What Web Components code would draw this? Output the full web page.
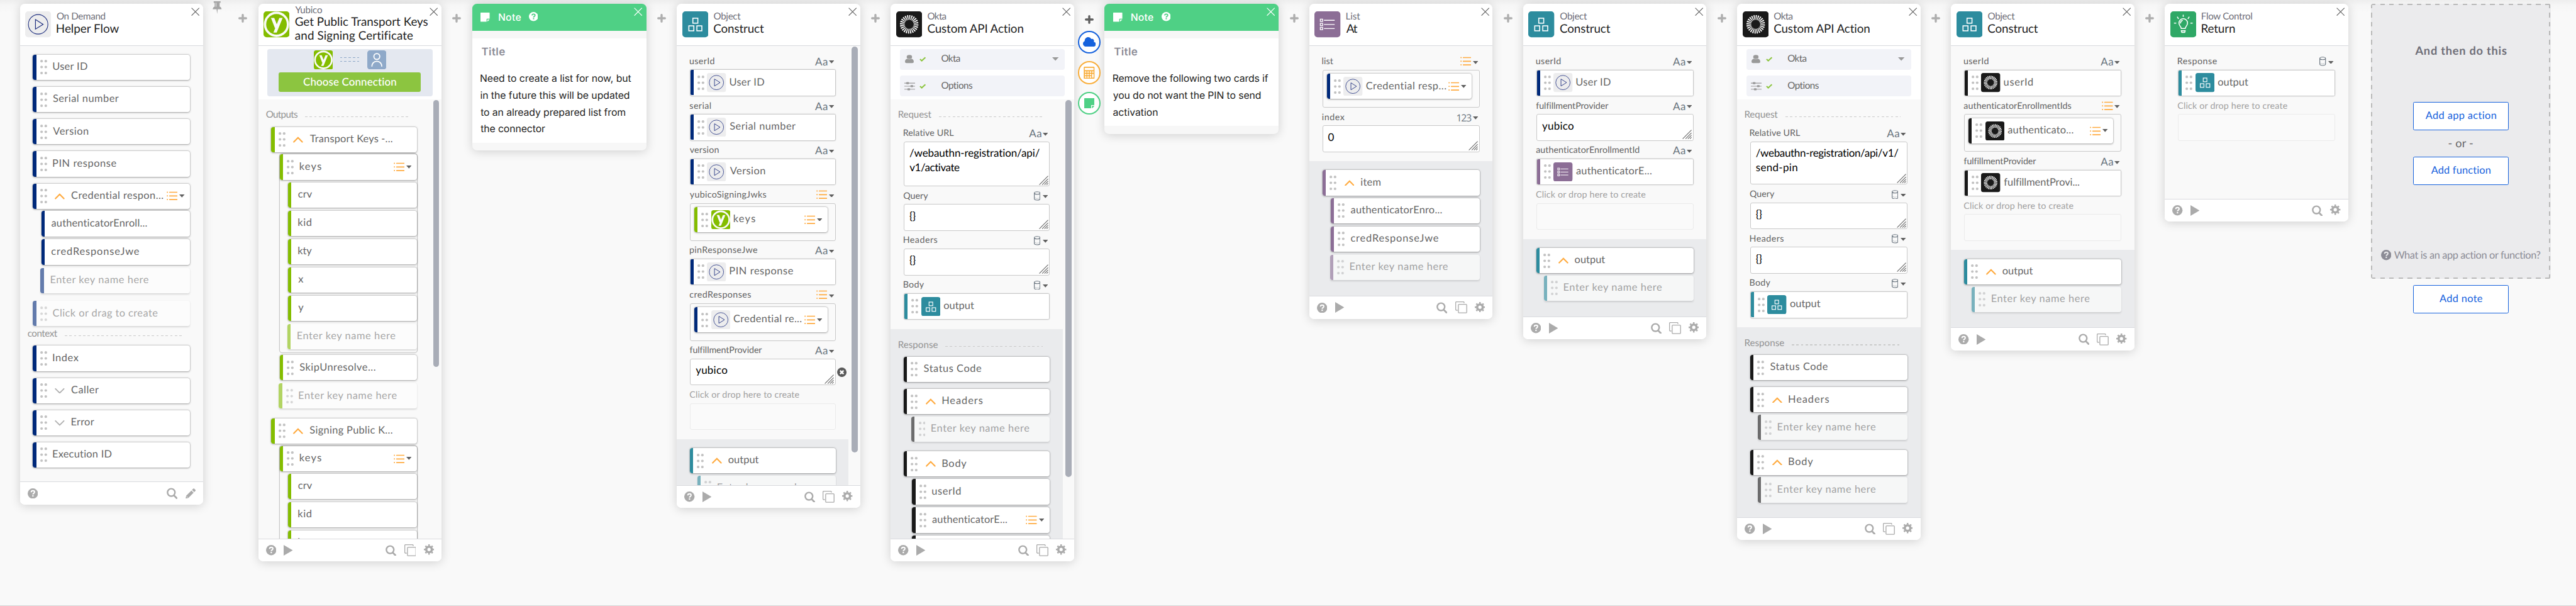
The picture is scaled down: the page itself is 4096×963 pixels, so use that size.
<!DOCTYPE html>
<html lang="en">
<head>
<meta charset="utf-8">
<title>Flow editor</title>
<style>
html,body{margin:0;padding:0;background:#f9f9f9;overflow:hidden}
body{height:963px;font-family:Lato,"Open Sans",sans-serif}
</style>
</head>
<body>
<flow-canvas>
  <flow-card icon="demand" h="1310" foot="help|search,pencil">
    <flow-text slot="cat" s="25" w="126">On Demand</flow-text>
    <flow-text slot="title" s="31" w="163">Helper Flow</flow-text>
    <flow-row c="navy" mt="23" w="90" label="User ID"></flow-row>
    <flow-row c="navy" w="172" label="Serial number"></flow-row>
    <flow-row c="navy" w="92" label="Version"></flow-row>
    <flow-row c="navy" w="165" label="PIN response"></flow-row>
    <flow-row c="navy" w="240" chev="up" list label="Credential respon..."></flow-row>
    <flow-row c="navy" w="250" mt="6" ind="22" bare label="authenticatorEnroll..."></flow-row>
    <flow-row c="navy" w="229" mt="8" ind="22" bare label="credResponseJwe"></flow-row>
    <flow-row c="navy" w="257" mt="8" ind="20" bare ghost label="Enter key name here"></flow-row>
    <flow-row c="navy" w="274" mt="20.5" ghost label="Click or drag to create"></flow-row>
    <flow-label w="77" h="51" pt="5">context</flow-label>
    <flow-row c="navy" mt="0" w="66.5" label="Index"></flow-row>
    <flow-row c="navy" w="71" chev="down" label="Caller"></flow-row>
    <flow-row c="navy" w="59" chev="down" label="Error"></flow-row>
    <flow-row c="navy" w="153" label="Execution ID"></flow-row>
  </flow-card>
  <flow-gap pin></flow-gap>

  <flow-card icon="yubico" h="1459" scroll="698" foot="help,play|search,copy,gear">
    <flow-text slot="cat" s="25" w="70">Yubico</flow-text>
    <flow-text slot="title" s="31" w="348">Get Public Transport Keys</flow-text>
    <flow-text slot="title" s="31" w="308">and Signing Certificate</flow-text>
    <flow-connect slot="top"></flow-connect>
    <flow-label w="82" h="72.5">Outputs</flow-label>
    <flow-row c="green" mt="0" w="216" chev="up" label="Transport Keys -..."></flow-row>
    <flow-nest>
      <flow-row c="green" mt="0" w="56" list label="keys"></flow-row>
      <flow-row c="green" mt="6.5" ind="22" w="36" bare label="crv"></flow-row>
      <flow-row c="green" mt="8" ind="22" w="34" bare label="kid"></flow-row>
      <flow-row c="green" mt="8" ind="22" w="35" bare label="kty"></flow-row>
      <flow-row c="green" mt="8" ind="22" w="13" bare label="x"></flow-row>
      <flow-row c="green" mt="8" ind="22" w="14.5" bare label="y"></flow-row>
      <flow-row c="green" mt="8" ind="20" w="257" bare ghost label="Enter key name here"></flow-row>
    </flow-nest>
    <flow-row c="green" mt="7.5" ind="22" w="198" label="SkipUnresolve..."></flow-row>
    <flow-row c="green" mt="8" ind="20" w="257" ghost label="Enter key name here"></flow-row>
    <flow-row c="green" mt="25.5" w="216" chev="up" label="Signing Public K..."></flow-row>
    <flow-nest>
      <flow-row c="green" mt="0" w="56" list label="keys"></flow-row>
      <flow-row c="green" mt="6.5" ind="22" w="36" bare label="crv"></flow-row>
      <flow-row c="green" mt="8" ind="22" w="34" bare label="kid"></flow-row>
      <flow-row c="green" mt="8" ind="22" w="35" bare label="kty"></flow-row>
    </flow-nest>
  </flow-card>
  <flow-gap></flow-gap>

  <flow-note h="383">
    <flow-text s="26" lh="44.3" w="394">Need to create a list for now, but</flow-text>
    <flow-text s="26" lh="44.3" w="389">in the future this will be updated</flow-text>
    <flow-text s="26" lh="44.3" w="378.6">to an already prepared list from</flow-text>
    <flow-text s="26" lh="44.3" w="168.6">the connector</flow-text>
  </flow-note>
  <flow-gap></flow-gap>

  <flow-card icon="object" h="1319" scroll="1062" foot="help,play|search,copy,gear">
    <flow-text slot="cat" s="25" w="70">Object</flow-text>
    <flow-text slot="title" s="31" w="131">Construct</flow-text>
    <flow-field mt="15.2" label="userId" w="64" type="Aa"><flow-row plain c="navy" icon="demand" w="90" label="User ID"></flow-row></flow-field>
    <flow-field label="serial" w="55" type="Aa"><flow-row plain c="navy" icon="demand" w="172" label="Serial number"></flow-row></flow-field>
    <flow-field label="version" w="75.5" type="Aa"><flow-row plain c="navy" icon="demand" w="92" label="Version"></flow-row></flow-field>
    <flow-field label="yubicoSigningJwks" w="200" type="list"><flow-row mt="0" c="green" icon="yubico" list w="56" label="keys"></flow-row></flow-field>
    <flow-field label="pinResponseJwe" w="177" type="Aa"><flow-row plain c="navy" icon="demand" w="165" label="PIN response"></flow-row></flow-field>
    <flow-field label="credResponses" w="160" type="list"><flow-row mt="0" c="navy" icon="demand" list w="177.5" label="Credential re..."></flow-row></flow-field>
    <flow-field label="fulfillmentProvider" w="189" type="Aa" input removable><flow-text s="28" lh="38" w="82">yubico</flow-text></flow-field>
    <flow-field label="Click or drop here to create" w="287" ghost></flow-field>
    <flow-output>
      <flow-row c="teal" mt="23.5" w="79" chev="up" label="output"></flow-row>
      <flow-row c="teal" mt="6" ind="20" w="257" ghost label="Enter key name here"></flow-row>
    </flow-output>
  </flow-card>
  <flow-gap></flow-gap>

  <flow-card icon="okta" h="1459" scroll="986" foot="help,play|search,copy,gear">
    <flow-text slot="cat" s="25" w="48">Okta</flow-text>
    <flow-text slot="title" s="31" w="252">Custom API Action</flow-text>
    <flow-pills slot="top"></flow-pills>
    <flow-label w="85.5" h="64">Request</flow-label>
    <flow-field label="Relative URL" w="131" type="Aa" input h="117.5"><flow-text s="28" lh="38" w="340">/webauthn-registration/api/</flow-text><flow-text s="28" lh="38" w="130">v1/activate</flow-text></flow-field>
    <flow-field label="Query" w="63.5" type="db" input><flow-text s="28" lh="38" w="15">{}</flow-text></flow-field>
    <flow-field label="Headers" w="88" type="db" input><flow-text s="28" lh="38" w="15">{}</flow-text></flow-field>
    <flow-field label="Body" w="53" type="db"><flow-row plain c="teal" icon="object" w="79" label="output"></flow-row></flow-field>
    <flow-output>
      <flow-label w="102" h="72.5">Response</flow-label>
      <flow-row c="black" mt="0" w="150" label="Status Code"></flow-row>
      <flow-row c="black" w="105" chev="up" label="Headers"></flow-row>
      <flow-row c="black" mt="6" ind="20" w="257" ghost label="Enter key name here"></flow-row>
      <flow-row c="black" mt="25" w="63" chev="up" label="Body"></flow-row>
      <flow-row c="black" mt="6.5" ind="22" w="74" label="userId"></flow-row>
      <flow-row c="black" mt="8" ind="22" w="195.5" list label="authenticatorE..."></flow-row>
      <flow-row c="black" mt="8" ind="22" w="229" label="credResponseJwe"></flow-row>
    </flow-output>
  </flow-card>
  <flow-gap open></flow-gap>

  <flow-note h="340">
    <flow-text s="26" lh="44.3" w="406">Remove the following two cards if</flow-text>
    <flow-text s="26" lh="44.3" w="386">you do not want the PIN to send</flow-text>
    <flow-text s="26" lh="44.3" w="116">activation</flow-text>
  </flow-note>
  <flow-gap></flow-gap>

  <flow-card icon="list" h="824" foot="help,play|search,copy,gear">
    <flow-text slot="cat" s="25" w="36">List</flow-text>
    <flow-text slot="title" s="31" w="29">At</flow-text>
    <flow-field mt="15.8" label="list" w="28.5" type="list"><flow-row mt="0" c="navy" icon="demand" list w="209" label="Credential resp..."></flow-row></flow-field>
    <flow-field label="index" w="58" type="123" input><flow-text s="28" lh="38" w="15">0</flow-text></flow-field>
    <flow-output>
      <flow-row c="purple" mt="23.5" w="51" chev="up" label="item"></flow-row>
      <flow-row c="purple" mt="6.5" ind="22" w="238.5" label="authenticatorEnro..."></flow-row>
      <flow-row c="purple" mt="8" ind="22" w="229" label="credResponseJwe"></flow-row>
      <flow-row c="purple" mt="8" ind="20" w="257" ghost label="Enter key name here"></flow-row>
    </flow-output>
  </flow-card>
  <flow-gap></flow-gap>

  <flow-card icon="object" h="878" foot="help,play|search,copy,gear">
    <flow-text slot="cat" s="25" w="70">Object</flow-text>
    <flow-text slot="title" s="31" w="131">Construct</flow-text>
    <flow-field mt="15.5" label="userId" w="64" type="Aa"><flow-row plain c="navy" icon="demand" w="90" label="User ID"></flow-row></flow-field>
    <flow-field label="fulfillmentProvider" w="189" type="Aa" input><flow-text s="28" lh="38" w="82">yubico</flow-text></flow-field>
    <flow-field label="authenticatorEnrollmentId" w="270" type="Aa"><flow-row plain c="purple" icon="list" w="197" label="authenticatorE..."></flow-row></flow-field>
    <flow-field label="Click or drop here to create" w="287" ghost></flow-field>
    <flow-output>
      <flow-row c="teal" mt="23.5" w="79" chev="up" label="output"></flow-row>
      <flow-row c="teal" mt="6" ind="20" w="257" ghost label="Enter key name here"></flow-row>
    </flow-output>
  </flow-card>
  <flow-gap></flow-gap>

  <flow-card icon="okta" h="1403" foot="help,play|search,copy,gear">
    <flow-text slot="cat" s="25" w="48">Okta</flow-text>
    <flow-text slot="title" s="31" w="252">Custom API Action</flow-text>
    <flow-pills slot="top"></flow-pills>
    <flow-label w="85.5" h="64">Request</flow-label>
    <flow-field label="Relative URL" w="131" type="Aa" input h="113"><flow-text s="28" lh="38" w="372.5">/webauthn-registration/api/v1/</flow-text><flow-text s="28" lh="38" w="108">send-pin</flow-text></flow-field>
    <flow-field label="Query" w="63.5" type="db" input><flow-text s="28" lh="38" w="15">{}</flow-text></flow-field>
    <flow-field label="Headers" w="88" type="db" input><flow-text s="28" lh="38" w="15">{}</flow-text></flow-field>
    <flow-field label="Body" w="53" type="db"><flow-row plain c="teal" icon="object" w="79" label="output"></flow-row></flow-field>
    <flow-output>
      <flow-label w="102" h="72.5">Response</flow-label>
      <flow-row c="black" mt="0" w="150" label="Status Code"></flow-row>
      <flow-row c="black" w="105" chev="up" label="Headers"></flow-row>
      <flow-row c="black" mt="6" ind="20" w="257" ghost label="Enter key name here"></flow-row>
      <flow-row c="black" mt="25" w="63" chev="up" label="Body"></flow-row>
      <flow-row c="black" mt="6" ind="20" w="257" ghost label="Enter key name here"></flow-row>
    </flow-output>
  </flow-card>
  <flow-gap></flow-gap>

  <flow-card icon="object" h="907" foot="help,play|search,copy,gear">
    <flow-text slot="cat" s="25" w="70">Object</flow-text>
    <flow-text slot="title" s="31" w="131">Construct</flow-text>
    <flow-field mt="15.5" label="userId" w="64" type="Aa"><flow-row plain c="black" icon="okta" w="75" label="userId"></flow-row></flow-field>
    <flow-field label="authenticatorEnrollmentIds" w="281" type="list"><flow-row mt="0" c="black" icon="okta" list w="171" label="authenticato..."></flow-row></flow-field>
    <flow-field label="fulfillmentProvider" w="189" type="Aa"><flow-row plain c="black" icon="okta" w="197" label="fulfillmentProvi..."></flow-row></flow-field>
    <flow-field label="Click or drop here to create" w="287" ghost></flow-field>
    <flow-output>
      <flow-row c="teal" mt="23.5" w="79" chev="up" label="output"></flow-row>
      <flow-row c="teal" mt="6" ind="20" w="257" ghost label="Enter key name here"></flow-row>
    </flow-output>
  </flow-card>
  <flow-gap></flow-gap>

  <flow-card icon="bulb" h="570" foot="help,play|search,gear">
    <flow-text slot="cat" s="25" w="132">Flow Control</flow-text>
    <flow-text slot="title" s="31" w="86">Return</flow-text>
    <flow-field mt="15.5" label="Response" w="102" type="db"><flow-row plain c="teal" icon="object" w="79" label="output"></flow-row></flow-field>
    <flow-field label="Click or drop here to create" w="287" ghost></flow-field>
  </flow-card>
  <flow-next></flow-next>
</flow-canvas>

<script>
const COLORS = {navy:'#00297a', green:'#84bd00', teal:'#2d8c9e', black:'#191919', purple:'#8c6e96'};
const SQUARE = '<rect width="68" height="68" rx="8" fill=';
const ICONS = {
  demand: ['0 0 68 68', SQUARE+'"#ededee"/><circle cx="34" cy="34" r="25.5" fill="none" stroke="#1f2f7f" stroke-width="1.8"/><path d="M27 21.5 47 34 27 46.5z" fill="none" stroke="#1f2f7f" stroke-width="2"/>'],
  yubico: ['0 0 68 68', SQUARE+'"#84bd00"/><circle cx="34" cy="34" r="30" fill="none" stroke="#fafafa" stroke-width="6"/><svg x="15" y="17.3" width="40" height="38.4" viewBox="15 17.3 40 38.4"><path d="M21 10 33.5 42M48.7 10 28 61" stroke="#fafafa" stroke-width="8" fill="none"/></svg>'],
  object: ['0 0 68 68', SQUARE+'"#2d8c9e"/><g fill="none" stroke="#fff" stroke-width="2.6"><rect x="27.5" y="18" width="13" height="13"/><rect x="17" y="38" width="13" height="13"/><rect x="38" y="38" width="13" height="13"/></g>'],
  okta: ['0 0 68 68', SQUARE+'"#191919"/><circle cx="34" cy="34" r="18" fill="none" stroke="#fff" stroke-width="12.5" pathLength="96" stroke-dasharray="2.2 1.8"/>'],
  list: ['0 0 68 68', SQUARE+'"#8c6e96"/><g fill="none" stroke="#fff" stroke-width="2.2"><rect x="15.5" y="20.5" width="6" height="6"/><rect x="15.5" y="31.5" width="6" height="6"/><rect x="15.5" y="42" width="6" height="6"/><path d="M25 23.5H53M25 34.500H53M25 45H53"/></g>'],
  bulb: ['0 0 68 68', SQUARE+'"#2fa866"/><g fill="none" stroke="#fff" stroke-width="2.6" stroke-linecap="round"><path d="M28.500 45C28.500 40 22.500 38 22.500 30.500a11 11 0 0 1 22.500 0C45 38 39 40 39 45z"/><path d="M26.500 31a7.500 7.500 0 0 1 5-7"/><path d="M28.500 50.500H39M30.500 55H37M28.500 50.500L30 55H37.500L39 50.500M33.700 10v3.500M18.500 15l2.500 4M49 15l-2.500 4M10.500 31h4M53.500 31h4"/></g>'],
  person: ['0 0 50 50', '<rect width="50" height="50" rx="7" fill="#8fa9c9"/><circle cx="25" cy="16" r="7.700" fill="none" stroke="#fff" stroke-width="3"/><path d="M12 42.500C12 34 17.500 28.500 25 28.500S38 34 38 42.500" fill="none" stroke="#fff" stroke-width="3"/>'],
  grip: ['0 0 18 38', '<g fill="#c2c2c2"><circle cx="3.500" cy="3.500" r="3.400"/><circle cx="14.500" cy="3.500" r="3.400"/><circle cx="3.500" cy="19" r="3.400"/><circle cx="14.500" cy="19" r="3.400"/><circle cx="3.500" cy="34.500" r="3.400"/><circle cx="14.500" cy="34.500" r="3.400"/></g>'],
  up: ['0 0 26 16', '<path d="M2 14 13 3 24 14" fill="none" stroke="#ffab40" stroke-width="3.600" stroke-linecap="round"/>'],
  down: ['0 0 26 16', '<path d="M2 3 13 14 24 3" fill="none" stroke="#b0b0b0" stroke-width="3" stroke-linecap="round"/>'],
  bars: ['0 0 29 24', '<g fill="#ffab40"><circle cx="1.900" cy="2.500" r="1.700"/><circle cx="1.900" cy="12" r="1.700"/><circle cx="1.900" cy="21.500" r="1.700"/><rect x="6.500" y="1.100" width="22.500" height="2.800" rx="1"/><rect x="6.500" y="10.600" width="22.500" height="2.800" rx="1"/><rect x="6.500" y="20.100" width="22.500" height="2.800" rx="1"/></g>'],
  caret: ['0 0 14 8', '<path d="M0 0H14L7 8z" fill="currentColor"/>'],
  db: ['0 0 17 24', '<g fill="none" stroke="#6b7680" stroke-width="1.900"><path d="M1 4.500V19.500C1 21.500 4 23 8.500 23S16 21.500 16 19.500V4.500"/><ellipse cx="8.500" cy="4.500" rx="7.500" ry="3.300"/></g><path d="M3 17.500q5.500 2.500 11 0" stroke="#6b7680" stroke-width="1.200" stroke-dasharray="2 1.500" fill="none"/>'],
  close: ['0 0 22 22', '<path d="M1 1 21 21M21 1 1 21" stroke="currentColor" stroke-width="1.800" fill="none"/>'],
  plus: ['0 0 23 23', '<path d="M11.500 2.800V20.200M2.800 11.500H20.200" stroke="currentColor" stroke-width="5.600" stroke-linecap="round"/>'],
  pin: ['0 0 24 34', '<path d="M3 0H21V4H18.500V14C21.500 15 23.500 17.500 23.500 21H13.500L12 33.500 10.500 21H.5C.5 17.500 2.500 15 5.500 14V4H3z" fill="#a6a6a6"/><path d="M9 4V14.500" stroke="#f4f4f4" stroke-width="1.500"/>'],
  help: ['0 0 27 27', '<circle cx="13.500" cy="13.500" r="13.500" fill="currentColor"/><path d="M9.200 10.300C9.400 7.500 11.300 6.300 13.600 6.300c2.500 0 4.400 1.500 4.400 3.700 0 3-4.200 3-4.200 6" fill="none" stroke="var(--mark,#fff)" stroke-width="3.300"/><rect x="12" y="18" width="3.500" height="3.600" fill="var(--mark,#fff)"/>'],
  play: ['0 0 24 28', '<path d="M0 0 24 14 0 28z" fill="currentColor"/>'],
  search: ['0 0 28 29', '<circle cx="12" cy="12.500" r="9.800" fill="none" stroke="currentColor" stroke-width="4"/><path d="M19 20 26 27.300" stroke="currentColor" stroke-width="4.600" stroke-linecap="round"/>'],
  copy: ['0 0 31 31', '<g fill="none" stroke="currentColor" stroke-width="2.200"><path d="M6 23H3Q1 23 1 21V3Q1 1 3 1H21Q23 1 23 3V4.500"/><rect x="8" y="7.500" width="22" height="22.500" rx="2"/></g>'],
  gear: ['0 0 27 27', '<g fill="none" stroke="currentColor"><circle cx="13.500" cy="13.500" r="7.300" stroke-width="6"/><circle cx="13.500" cy="13.500" r="11.500" stroke-width="4" pathLength="16" stroke-dasharray=".9 1.100" stroke-dashoffset=".45"/></g>'],
  pencil: ['0 0 27 27', '<path d="M0 27 1.800 19.500 15.500 5.800 21.200 11.500 7.500 25.200zM17 4.300 20.300 1Q21.500 0 22.800 1L26 4.200Q27 5.500 26 6.700L22.700 10z" fill="currentColor"/><path d="M3 21.500 5.500 24" stroke="#fff" stroke-width="1.500"/>'],
  user: ['0 0 23 29', '<circle cx="11.500" cy="7.500" r="7" fill="#999"/><path d="M0 24.500C0 17 4 14.500 6.500 14.300Q11.500 17.500 16.500 14.300C19 14.500 23 17 23 24.500Q23 28.500 19 28.500H4Q0 28.500 0 24.500z" fill="#999"/>'],
  check: ['0 0 17 13', '<path d="M1.500 6.500 6 10.800 15.500 2" fill="none" stroke="#8dc540" stroke-width="3.200"/>'],
  sliders: ['0 0 28 26', '<path d="M0 4H28M0 13H28M0 22H28" stroke="#999" stroke-width="2"/><g fill="#999"><rect x="5" y="1" width="7" height="6" rx="1.500"/><rect x="16" y="10" width="7" height="6" rx="1.500"/><rect x="8" y="19" width="7" height="6" rx="1.500"/></g>'],
  sticky: ['0 0 24 24', '<path d="M1 0H23Q24 0 24 1V16H17Q16 16 16 17V24H1Q0 24 0 23V1Q0 0 1 0zM18 18H24L18 24z" fill="currentColor"/>'],
  cloud: ['0 0 34 25', '<path d="M8 25C3.500 25 0 21.500 0 17.300 0 13.800 2 11.300 4.500 10.200 4.300 4.300 8.500 0 13.500 0c3.800 0 6.500 2 8 5 4-1.800 8 .8 7.500 5.600-.1.700-.3 1.200-.5 1.600C32 13 34 15.500 34 18.500 34 22 31 25 27.500 25z" fill="#1662dd"/>'],
  calc: ['0 0 29 32', '<rect x=".5" width="28" height="32" rx="2" fill="#f9ae3b"/><g fill="#fff"><rect x="3" y="3" width="23" height="6"/><circle cx="5.500" cy="14" r="2.100"/><circle cx="11.700" cy="14" r="2.100"/><circle cx="18" cy="14" r="2.100"/><circle cx="24.200" cy="14" r="2.100"/><circle cx="5.500" cy="20.500" r="2.100"/><circle cx="11.700" cy="20.500" r="2.100"/><circle cx="18" cy="20.500" r="2.100"/><circle cx="5.500" cy="27" r="2.100"/><circle cx="11.700" cy="27" r="2.100"/><circle cx="18" cy="27" r="2.100"/><rect x="22.200" y="18.500" width="4" height="10.500" rx="2"/></g>'],
  remove: ['0 0 25 25', '<circle cx="12.500" cy="12.500" r="12.300" fill="#5a5a5a"/><path d="M8 8 17 17M17 8 8 17" stroke="#fff" stroke-width="4"/>'],
  grab: ['0 0 25 25', '<path d="M1 24 24 1M8.500 24 24 8.500M14.500 24 24 14.500M20 24 24 20" stroke="#666" stroke-width="1.800"/>']
};
const SIZE = {grip:[18,38],up:[26,16],down:[26,16],bars:[29,24],caret:[14,8],db:[17,24],close:[22,22],plus:[23,23],pin:[24,34],help:[27,27],play:[24,28],search:[28,29],copy:[31,31],gear:[27,27],pencil:[27,27],user:[23,22],check:[17,13],sliders:[28,23],sticky:[24,24],cloud:[34,25],calc:[29,32],remove:[25,25],grab:[25,25],person:[50,50]};

class Base extends HTMLElement {
  connectedCallback() {
    if (!this.shadowRoot) this.attachShadow({mode:'open'}).innerHTML = this.view();
    if (this.ready) this.ready();
  }
  a(n, d) { return this.hasAttribute(n) ? this.getAttribute(n) : d; }
  has(n) { return this.hasAttribute(n); }
}
const icon = (n, cls = '', s = '') => `<flow-icon name="${n}" ${s ? `size="${s}"` : ''} class="${cls}"></flow-icon>`;
const text = (t, s, w, extra = '') => `<flow-text s="${s}" w="${w}" ${extra}>${t}</flow-text>`;

customElements.define('flow-icon', class extends Base {
  view() {
    const n = this.a('name'), [vb, body] = ICONS[n], s = this.a('size');
    const [w, h] = s ? [s, s] : SIZE[n];
    return `<style>:host{display:block;flex:none;width:${w}px;height:${h}px}svg.i{display:block;width:100%;height:100%}</style><svg class="i" viewBox="${vb}" preserveAspectRatio="none">${body}</svg>`;
  }
});

// A line of text whose tracking is set so that its inked width is exactly `w`.
const ruler = document.createElement('canvas').getContext('2d');
customElements.define('flow-text', class extends Base {
  view() {
    const t = this.textContent, s = +this.a('s'), w = +this.a('w'), wt = this.a('wt', '400'), fam = this.a('font') || (this.closest('flow-note') ? 'Inter' : 'Lato');
    ruler.font = `${wt} ${s * 4}px ${fam}`;
    ruler.letterSpacing = '0.01px';
    const m = ruler.measureText(t);
    const ink = (m.actualBoundingBoxLeft + m.actualBoundingBoxRight) / 4;
    const ls = t.length > 1 ? (w - ink) / (t.length - 1) : 0;
    return `<style>:host{display:block;flex:none;width:${w}px;white-space:nowrap;text-align:left;font:${wt} ${s}px/${this.a('lh', '30')}px ${fam},sans-serif;letter-spacing:${ls.toFixed(3)}px;font-variant-ligatures:none;text-rendering:geometricPrecision}span{display:block;margin-left:${(m.actualBoundingBoxLeft / 4).toFixed(2)}px}</style><span><slot></slot></span>`;
  }
});

customElements.define('flow-canvas', class extends Base {
  view() {
    return `<style>:host{display:block;box-sizing:border-box;zoom:.60735;width:6744px;height:1585.600px;border-bottom:2px solid #d6d6d6;background:linear-gradient(#eeeeee,#f6f6f6 14px,#f9f9f9 34px)}
    .rail{display:flex;align-items:flex-start;padding-left:52px}</style><div class="rail"><slot></slot></div>`;
  }
});

customElements.define('flow-gap', class extends Base {
  view() {
    const pin = this.has('pin'), open = this.has('open');
    return `<style>:host{display:flex;flex:none;width:${pin ? 144 : 80}px;color:#aeaeae}
    .pin{margin:4px 0 0 25px}.col{display:flex;flex-direction:column;align-items:center;width:80px;margin-left:auto;padding-top:37px}
    .open{padding-top:39px;color:#5f5f5f}.pin+.col{width:80px;margin-left:15px}
    .ring{box-sizing:border-box;width:60px;height:60px;border:4px solid;border-radius:50%;background:#fff;display:flex;align-items:center;justify-content:center;margin-top:20px}
    .plus+.ring{margin-top:18px}.b{color:#1662dd}.o{color:#f9ae3b}.g{color:#4fd085}</style>
    ${pin ? icon('pin', 'pin') : ''}<div class="col ${open ? 'open' : ''}">${icon('plus', 'plus')}${open ? `<div class="ring b">${icon('cloud')}</div><div class="ring o">${icon('calc')}</div><div class="ring g">${icon('sticky', '', 27)}</div>` : ''}</div>`;
  }
});

customElements.define('flow-card', class extends Base {
  view() {
    const [l, r] = this.a('foot').split('|').map(p => p.split(',').map(n => icon(n, n)).join(''));
    const sc = this.a('scroll');
    return `<style>:host{display:flex;flex-direction:column;flex:none;box-sizing:border-box;width:480px;height:${this.a('h')}px;margin-top:10px;border-radius:12px;overflow:hidden;background:#fff;box-shadow:0 2px 26px rgba(0,0,0,.17)}
    header{display:flex;flex:none;box-sizing:border-box;height:110px;border-bottom:2px solid #d9dade;padding:0 9px 0 14px}
    .logo{margin-top:20px}
    .t{display:flex;flex-direction:column;justify-content:center;margin-left:15px;padding-bottom:4px;flex:1;color:#1d1d21}
    .cat{line-height:28px;color:#6e6e78;height:28px;margin-top:-1px}
    .cat ::slotted(*),::slotted([slot=cat]){margin-top:-1px}
    .title{display:flex;flex-direction:column;gap:6px;padding:3px 0}
    .x{color:#666;margin-top:10px;margin-left:-22px}
    .body{display:flex;flex:1;min-height:0;background:#f9f9f9;overflow:hidden}
    .content{display:flex;flex-direction:column;flex:1;min-width:0;box-sizing:border-box;padding:0 34px}
    .track{width:30px;flex:none}.thumb{width:16px;height:${sc || 0}px;border-radius:8px;background:#a9adb7;margin:2px 0 0 8px}
    footer{display:flex;align-items:center;flex:none;box-sizing:border-box;height:60px;border-top:2px solid #d9dade;padding:0 20px;color:#ababab;background:#fff}
    .play{margin-left:20px}.sp{flex:1}.search{margin-right:20.5px}.copy{margin-right:20px}.gear{margin-top:-3px}</style>
    <header>${icon(this.a('icon'), 'logo', 68)}<div class="t"><div class="cat"><slot name="cat"></slot></div><div class="title"><slot name="title"></slot></div></div>${icon('close', 'x')}</header>
    <slot name="top"></slot>
    <div class="body"><div class="content"><slot></slot></div>${sc ? '<div class="track"><div class="thumb"></div></div>' : ''}</div>
    <footer>${l}<div class="sp"></div>${r}</footer>`;
  }
});

customElements.define('flow-row', class extends Base {
  view() {
    const ghost = this.has('ghost'), plain = this.has('plain'), bare = this.has('bare'), ic = this.a('icon'), chev = this.a('chev');
    return `<style>:host{display:flex;flex:none;align-items:center;box-sizing:border-box;height:${plain ? 66 : 66.2}px;margin-top:${plain ? 0 : this.a('mt', '18.1')}px;margin-left:${this.a('ind', 0)}px;background:#fff;border-radius:${plain ? 3 : 6}px;color:#666;overflow:hidden;
      ${plain ? '' : ghost ? 'opacity:.6;box-shadow:0 2px 4px rgba(0,0,0,.2);' : 'box-shadow:0 0 0 1px rgba(0,0,0,.13),0 1px 5px rgba(0,0,0,.32);'}padding-right:14.600px}
    .bar{width:9px;align-self:stretch;background:${COLORS[this.a('c')]}}
    .grip{margin-left:10px}.chev{margin-left:21px}.ic{margin-left:7px}
    .tx{margin-left:${bare ? 18 : chev ? 17.5 : ic ? 9.6 : 16}px;margin-top:-2px;${ghost ? 'color:#707070' : ''}}
    .sp{flex:1}.caret{margin-left:4.500px;color:#606060}</style>
    <div class="bar"></div>${bare ? '' : icon('grip', 'grip')}${chev ? icon(chev, 'chev') : ''}${ic ? icon(ic, 'ic', 50) : ''}
    ${text(this.a('label'), 27, this.a('w'), 'class="tx"')}<div class="sp"></div>${this.has('list') ? icon('bars') + icon('caret', 'caret') : ''}`;
  }
});

customElements.define('flow-nest', class extends Base {
  view() {
    return `<style>:host{display:flex;flex-direction:column;flex:none;margin:6px 0 0 22px;padding-bottom:7.500px;border-radius:6px;box-shadow:0 0 0 2px #c9c9c9}</style><slot></slot>`;
  }
});

customElements.define('flow-output', class extends Base {
  view() {
    return `<style>:host{display:flex;flex-direction:column;flex:1;margin:24px -34px 0;padding:0 34px;background:#eaebed}</style><slot></slot>`;
  }
});

customElements.define('flow-label', class extends Base {
  view() {
    return `<style>:host{display:flex;flex:none;box-sizing:border-box;height:${this.a('h')}px;padding-top:${this.a('pt', '26')}px;margin-left:-13px;color:#939393}
    .d{flex:1;height:2px;margin:19px 18px 0 20px;background:repeating-linear-gradient(90deg,#cbcbcb 0 6px,transparent 6px 12px)}</style>
    ${text(this.textContent, 25, this.a('w'))}<div class="d"></div>`;
  }
});

customElements.define('flow-field', class extends Base {
  view() {
    const ty = this.a('type'), ghost = this.has('ghost'), input = this.has('input'), list = ty === 'list';
    const mark = !ty ? '' : ty === 'list' ? icon('bars', 'm') : ty === 'db' ? icon('db', 'dbm') : ty === 'Aa' ? text('Aa', 28, 32, 'class="aa"') : text('123', 26, 37, 'class="aa"  font="Open Sans"');
    return `<style>:host{display:flex;flex-direction:column;flex:none;margin-top:${this.a('mt', 0)}px}
    .h{display:flex;align-items:flex-end;box-sizing:border-box;height:46.500px;padding-bottom:5.500px;color:${ghost ? '#a0a0a0' : '#636363'}}
    .sp{flex:1}.aa{color:#6b7680}.m{margin-bottom:4px}.dbm{margin:0 2px 3.500px 0}
    .caret{margin:0 4px 9.500px 4px;color:#606060}
    .line{display:flex;align-items:center}
    .b{position:relative;box-sizing:border-box;width:100%;flex:none;height:${this.a('h', list ? 99 : 70)}px;border:2px solid ${ghost ? '#ebebeb' : '#c9c9c9'};border-radius:5px;background:${list || ghost ? '#fafafa' : '#fff'};
      ${list ? 'padding:9px 19px 0 10px;' : input ? 'padding:9px 0 0 14px;color:#000;' : ''}${!list && !input && !ghost ? 'box-shadow:0 0 3px rgba(0,0,0,.2);' : ''}}
    .g{position:absolute;right:2px;bottom:2px}.rm{margin-left:3px;margin-right:-28px}</style>
    <div class="h">${text(this.a('label'), 23.5, this.a('w'))}<div class="sp"></div>${mark}${ty ? icon('caret', 'caret') : ''}</div>
    <div class="line"><div class="b"><slot></slot>${input ? icon('grab', 'g') : ''}</div>${this.has('removable') ? icon('remove', 'rm') : ''}</div>`;
  }
});

customElements.define('flow-connect', class extends Base {
  view() {
    return `<style>:host{display:block;flex:none;box-sizing:border-box;height:139.500px;padding:8px 24px 0;background:#fff}
    .box{display:flex;flex-direction:column;align-items:center;box-sizing:border-box;height:123.800px;padding-top:3px;border-radius:6px;background:#e4e8f0}
    .top{display:flex;align-items:center}.l{width:50px;height:8px;margin:0 20px;border-top:2px dashed #8fa9c9;border-bottom:2px dashed #8fa9c9;border-image:repeating-linear-gradient(90deg,#8fa9c9 0 6px,transparent 6px 11px) 2}
    .btn{display:flex;align-items:center;justify-content:center;width:372px;height:52px;margin-top:8px;border-radius:5px;background:#8cc540;color:#fff}
    .btn flow-text{margin-top:-2px}</style>
    <div class="box"><div class="top">${icon('yubico', '', 50)}<div class="l"></div>${icon('person')}</div><div class="btn">${text('Choose Connection', 28, 242, 'wt="500"')}</div></div>`;
  }
});

customElements.define('flow-pills', class extends Base {
  view() {
    return `<style>:host{display:flex;flex-direction:column;gap:16px;flex:none;box-sizing:border-box;height:139.500px;padding:8px 24px 0;background:#fff}
    .p{display:flex;align-items:center;height:54px;border-radius:6px;background:#f2f3f8;color:#666}
    .i{width:27px;display:flex;justify-content:center;margin:0 13px 0 12px}.t{margin:-3px 0 0 40px}
    .c{margin-left:auto;margin-right:17px;color:#999;width:17px;height:9px}</style>
    <div class="p"><div class="i">${icon('user')}</div>${icon('check')}${text('Okta', 25, 48.5, 'class="t"')}${icon('caret', 'c')}</div>
    <div class="p"><div class="i">${icon('sliders')}</div>${icon('check')}${text('Options', 25, 81, 'class="t"')}</div>`;
  }
});

customElements.define('flow-note', class extends Base {
  view() {
    return `<style>:host{display:flex;flex-direction:column;flex:none;box-sizing:border-box;width:456px;height:${this.a('h')}px;margin-top:10px;padding-bottom:20px;border-radius:12px;overflow:hidden;background:#f7f7f7;color:#1d1d21;box-shadow:0 2px 26px rgba(0,0,0,.17)}
    header{display:flex;flex:none;box-sizing:border-box;height:70px;background:#4fd085;color:#fff;--mark:#4fd085;padding:23px 9.500px 0 22.500px;margin-bottom:20px}
    .n{margin:-2.500px 0 0 23.500px}.q{margin:-1px 0 0 21px;width:24px;height:24px}.x{margin:-13px 0 0 auto}
    .w{flex:1;background:#fff;padding:22px 22.500px 0}.ti{color:#8c8c96;margin-left:3px;margin-bottom:32px}</style>
    <header>${icon('sticky')}${text('Note', 26, 57.5, 'font="Inter" class="n" wt="500"')}${icon('help', 'q')}${icon('close', 'x')}</header>
    <div class="w">${text('Title', 28, 60, 'font="Inter" class="ti" wt="600"')}<slot></slot></div>`;
  }
});

customElements.define('flow-button', class extends Base {
  view() {
    return `<style>:host{display:flex;flex:none;align-items:center;justify-content:center;box-sizing:border-box;width:250px;height:74px;border:2px solid #1662dd;border-radius:4px;background:#fff;color:#1662dd}flow-text{margin-top:-2px}</style>${text(this.textContent, 27, this.a('w'))}`;
  }
});

customElements.define('flow-next', class extends Base {
  view() {
    const h = 'repeating-linear-gradient(90deg,#b9b9b9 0 12px,transparent 12px 24px)', v = 'repeating-linear-gradient(#b9b9b9 0 12px,transparent 12px 23.600px)';
    return `<style>:host{display:flex;flex-direction:column;align-items:center;flex:none;width:470px;margin:10px 0 0 60px}
    .z{display:flex;flex-direction:column;align-items:center;box-sizing:border-box;width:470px;height:720px;border-radius:6px;
      background:${h} 0 0/100% 4px no-repeat,${h} 0 100%/100% 4px no-repeat,${v} 0 0/4px 100% no-repeat,${v} 100% 0/4px 100% no-repeat,#ebebed}
    .a{color:#6e6e78;margin-top:102px}.f{margin-top:115px}.or{color:#666;margin:18.500px 0}
    .q{display:flex;align-items:center;margin-top:167px;color:#8c8c96;--mark:#ebebed}.q flow-text{margin:3px 0 0 7.500px}
    .n{margin-top:16px}</style>
    <div class="z">${text('And then do this', 30, 239, 'wt="700" lh="40" class="a"')}
    <flow-button class="f" w="185">Add app action</flow-button>${text('- or -', 30, 63.5, 'lh="32" class="or"')}<flow-button w="155.5">Add function</flow-button>
    <div class="q">${icon('help')}${text('What is an app action or function?', 27, 384)}</div></div>
    <flow-button class="n" w="112">Add note</flow-button>`;
  }
});
</script>
</body>
</html>
